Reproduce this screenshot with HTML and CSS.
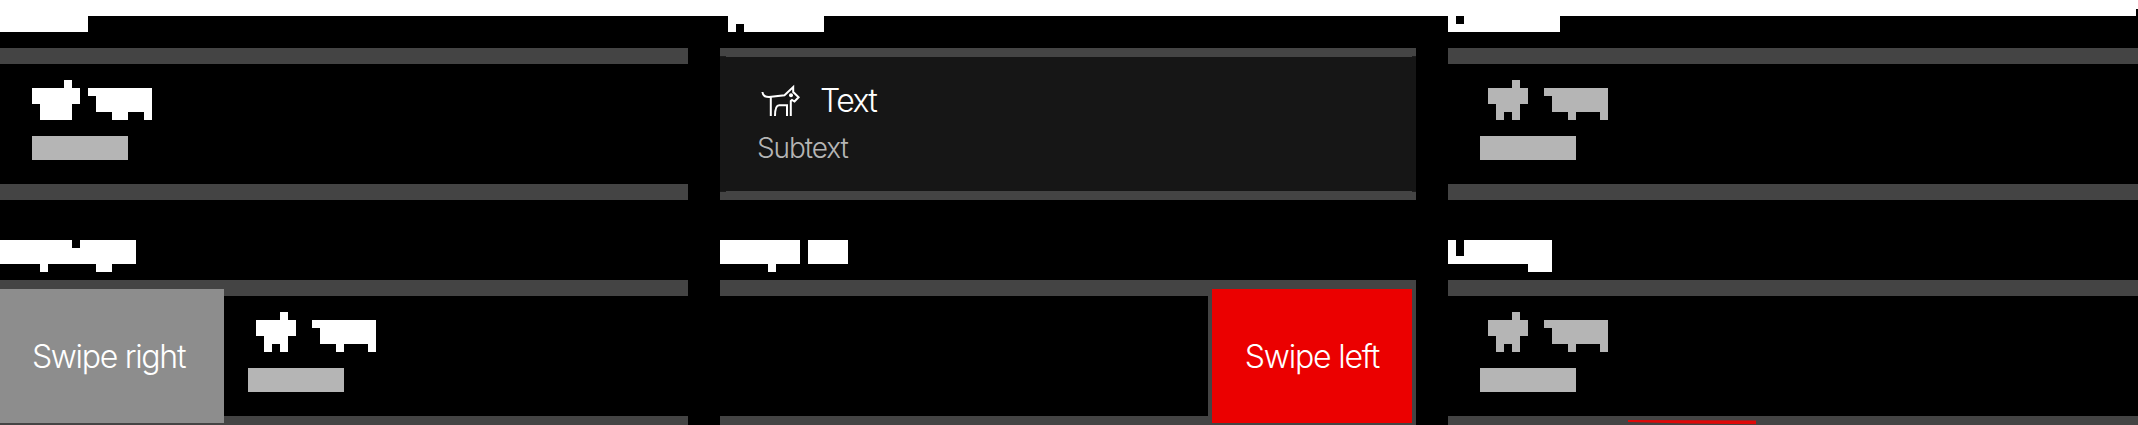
FILE: index.html
```html
<!DOCTYPE html>
<html lang="en">
<head>
<meta charset="utf-8">
<title>List row states</title>
<link rel="stylesheet" href="styles.css">
</head>
<body>
<svg class="defs" width="0" height="0">
  <symbol id="block-title" viewBox="0 0 128 80">
    <path d="M8 8H32V0H40V8H48V24H40V40H32V32H24V40H16V24H8zM64 8H128V40H120V32H96V40H88V32H72V16H64z"/>
    <path class="muted" d="M0 56H96V80H0z"/>
  </symbol>
</svg>
<div class="topbar"><span class="topbar-end"></span></div>
<main class="grid">
  <section class="cell">
    <div class="head head-first"><svg width="144" height="16"><path d="M0 0H88V16H0z"/></svg></div>
    <div class="card plain first-card">
      <svg width="128" height="80"><path d="M0 8H32V0H40V8H48V24H40V40H8V24H0zM56 8H120V40H112V32H96V40H80V32H64V16H56z"/><path class="muted" d="M0 56H96V80H0z"/></svg>
    </div>
  </section>
  <section class="cell">
    <div class="head head-first"><svg width="144" height="16"><path d="M8 0H104V16H24V8H16V16H8z"/></svg></div>
    <div class="card pressed">
      <div class="surface">
        <div class="title-row">
          <svg class="dog" width="40" height="34" viewBox="0 0 40 34"><path d="M1.4 8C1.8 11.5 4.5 13 8 13L23.5 11.2L32.2 3V8L37.6 13.2L33.5 17.5L31 16L29.8 17V32M9.8 13V32M14 32C14 26 15 21.2 18.2 21.2H26V32"/><circle cx="30" cy="11.2" r="2"/></svg>
          <span class="title">Text</span>
        </div>
        <div class="subtitle">Subtext</div>
      </div>
    </div>
  </section>
  <section class="cell">
    <div class="head head-first"><svg width="144" height="16"><path d="M0 0H8V8H16V0H112V16H0z"/></svg></div>
    <div class="card plain disabled"><svg width="128" height="80"><use href="#block-title"/></svg></div>
  </section>
  <section class="cell">
    <div class="head"><svg width="160" height="32"><path d="M0 0H72V8H80V0H136V24H112V32H96V24H48V32H40V24H0z"/></svg></div>
    <div class="card swiped-right">
      <div class="action reveal">Swipe right</div>
      <div class="remainder"><svg width="128" height="80"><use href="#block-title"/></svg></div>
    </div>
  </section>
  <section class="cell">
    <div class="head"><svg width="160" height="32"><path d="M0 0H80V24H56V32H48V24H0zM88 0H128V24H88z"/></svg></div>
    <div class="card swiped-left">
      <div class="empty"></div>
      <div class="action remove">Swipe left</div>
    </div>
  </section>
  <section class="cell">
    <div class="head"><svg width="160" height="32"><path d="M0 0H8V16H16V0H104V32H80V24H0z"/></svg></div>
    <div class="card plain disabled"><svg width="128" height="80"><use href="#block-title"/></svg>
      <svg class="stroke" width="132" height="5"><path d="M2 0L130 .5V4.2L60 3.5L2 2z"/></svg>
    </div>
  </section>
</main>
</body>
</html>
```
FILE: styles.css
```css
* { box-sizing: border-box; }
body { margin: 0; height: 425px; overflow: hidden; background: #000; color: #fff; font-family: Inter, "Liberation Sans", sans-serif; font-weight: 300; }
svg { display: block; fill: currentColor; }
.defs { position: absolute; }
.topbar { height: 16px; background: #fff; display: flex; justify-content: flex-end; align-items: flex-end; }
.topbar-end { width: 2px; height: 7px; background: #000; }
.grid { display: grid; grid-template-columns: 688px 696px 690px; column-gap: 32px; grid-template-rows: 224px 192px; }
.head { height: 40px; }
.head-first { height: 32px; }
.card { height: 152px; background: #444; }
.plain { padding: 16px 32px; border: solid #444; border-width: 16px 0; background: #000; position: relative; }
.muted { fill: #b5b5b5; }
.disabled { color: #b5b5b5; }
.pressed { padding: 9px 0; background: linear-gradient(90deg, #1c1c1c 6px, transparent 6px, transparent 692px, #1c1c1c 692px) 0 8px / 100% 136px no-repeat #444; }
.surface { height: 134px; padding: 25px 38px; background: #161616; }
.title-row { display: flex; height: 42px; }
.dog { margin: 2px 19px 0 3px; overflow: visible; }
.dog path { fill: none; stroke: #fff; stroke-width: 2; }
.title { font-size: 32px; line-height: 38px; letter-spacing: -1.6px; }
.subtitle { color: #b5b5b5; font-size: 28px; line-height: 49px; letter-spacing: -1.1px; margin-left: -1px; }
.swiped-right, .swiped-left { display: flex; }
.action { height: 134px; margin-top: 9px; font-size: 32px; line-height: 135px; letter-spacing: -1.2px; text-align: center; white-space: nowrap; }
.reveal { width: 224px; background: #8d8d8d; padding-right: 7px; letter-spacing: -1.3px; }
.remainder { flex: 1; height: 120px; margin-top: 16px; padding: 16px 24px; background: #000; }
.empty { width: 488px; height: 120px; margin: 16px 4px 0 0; background: #000; }
.remove { width: 200px; background: #eb0000; }
.stroke { position: absolute; left: 178px; top: 124px; color: #e00808; }
```
